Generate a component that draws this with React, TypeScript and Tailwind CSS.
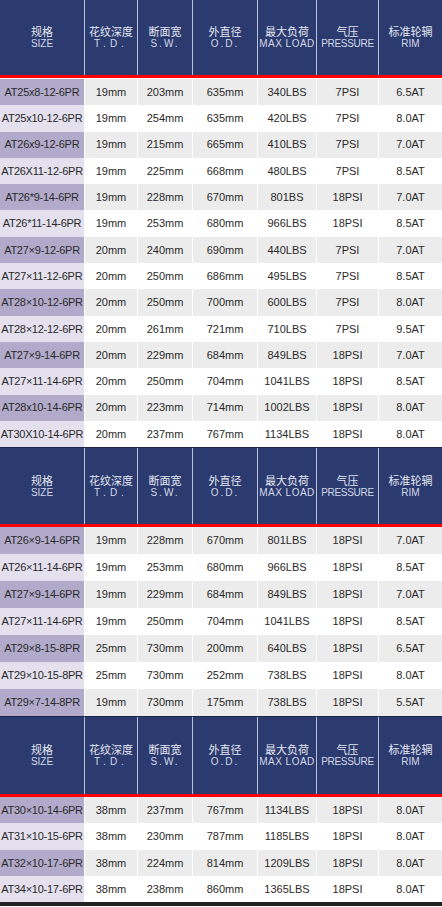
const cols = "grid grid-cols-[84px_53px_55px_65px_59px_62px_64px]"

const head = [
  { zh: "规格", en: "SIZE", track: "tracking-[0px]" },
  { zh: "花纹深度", en: "T.D.", track: "tracking-[4px]" },
  { zh: "断面宽", en: "S.W.", track: "tracking-[2px]" },
  { zh: "外直径", en: "O.D.", track: "tracking-[2px]" },
  { zh: "最大负荷", en: "MAX LOAD", track: "tracking-[0.5px]" },
  { zh: "气压", en: "PRESSURE", track: "tracking-[-0.3px]" },
  { zh: "标准轮辋", en: "RIM", track: "tracking-[0px]" },
]

const t1 = [
  ["AT25x8-12-6PR", "19mm", "203mm", "635mm", "340LBS", "7PSI", "6.5AT"],
  ["AT25x10-12-6PR", "19mm", "254mm", "635mm", "420LBS", "7PSI", "8.0AT"],
  ["AT26x9-12-6PR", "19mm", "215mm", "665mm", "410LBS", "7PSI", "7.0AT"],
  ["AT26X11-12-6PR", "19mm", "225mm", "668mm", "480LBS", "7PSI", "8.5AT"],
  ["AT26*9-14-6PR", "19mm", "228mm", "670mm", "801BS", "18PSI", "7.0AT"],
  ["AT26*11-14-6PR", "19mm", "253mm", "680mm", "966LBS", "18PSI", "8.5AT"],
  ["AT27×9-12-6PR", "20mm", "240mm", "690mm", "440LBS", "7PSI", "7.0AT"],
  ["AT27×11-12-6PR", "20mm", "250mm", "686mm", "495LBS", "7PSI", "8.5AT"],
  ["AT28×10-12-6PR", "20mm", "250mm", "700mm", "600LBS", "7PSI", "8.0AT"],
  ["AT28×12-12-6PR", "20mm", "261mm", "721mm", "710LBS", "7PSI", "9.5AT"],
  ["AT27×9-14-6PR", "20mm", "229mm", "684mm", "849LBS", "18PSI", "7.0AT"],
  ["AT27×11-14-6PR", "20mm", "250mm", "704mm", "1041LBS", "18PSI", "8.5AT"],
  ["AT28x10-14-6PR", "20mm", "223mm", "714mm", "1002LBS", "18PSI", "8.0AT"],
  ["AT30X10-14-6PR", "20mm", "237mm", "767mm", "1134LBS", "18PSI", "8.0AT"],
]

const t2 = [
  ["AT26×9-14-6PR", "19mm", "228mm", "670mm", "801LBS", "18PSI", "7.0AT"],
  ["AT26×11-14-6PR", "19mm", "253mm", "680mm", "966LBS", "18PSI", "8.5AT"],
  ["AT27×9-14-6PR", "19mm", "229mm", "684mm", "849LBS", "18PSI", "7.0AT"],
  ["AT27×11-14-6PR", "19mm", "250mm", "704mm", "1041LBS", "18PSI", "8.5AT"],
  ["AT29×8-15-8PR", "25mm", "730mm", "200mm", "640LBS", "18PSI", "6.5AT"],
  ["AT29×10-15-8PR", "25mm", "730mm", "252mm", "738LBS", "18PSI", "8.0AT"],
  ["AT29×7-14-8PR", "19mm", "730mm", "175mm", "738LBS", "18PSI", "5.5AT"],
]

const t3 = [
  ["AT30×10-14-6PR", "38mm", "237mm", "767mm", "1134LBS", "18PSI", "8.0AT"],
  ["AT31×10-15-6PR", "38mm", "230mm", "787mm", "1185LBS", "18PSI", "8.0AT"],
  ["AT32×10-17-6PR", "38mm", "224mm", "814mm", "1209LBS", "18PSI", "8.0AT"],
  ["AT34×10-17-6PR", "38mm", "238mm", "860mm", "1365LBS", "18PSI", "8.0AT"],
]

function Header({ h }: { h: string }) {
  return (
    <div className={`${cols} ${h} bg-[#2b3a6f]`}>
      {head.map((c, i) => (
        <div
          key={i}
          className={`flex flex-col items-center justify-center ${
            i > 0 ? "border-l border-l-[#b9c0d8]" : ""
          }`}
        >
          <span className="text-[11px] leading-[13px] text-[#e4e7f1] font-['Noto_Sans_CJK_SC',sans-serif]">
            {c.zh}
          </span>
          <span
            className={`text-[10px] leading-[12px] text-[#d3d8e8] font-['Liberation_Sans',sans-serif] ${c.track}`}
          >
            {c.en}
          </span>
        </div>
      ))}
    </div>
  )
}

function Rows({ rows, h }: { rows: string[][]; h: string }) {
  return (
    <div>
      {rows.map((r, i) => {
        const odd = i % 2 === 0
        return (
          <div key={i} className={`${cols} ${h}`}>
            {r.map((v, j) => (
              <div
                key={j}
                className={`flex items-center justify-center whitespace-nowrap text-[11px] text-[#2a2a2a] font-['Liberation_Sans',sans-serif] ${
                  j > 0 ? "border-l border-l-white" : "tracking-[-0.25px]"
                } ${
                  j === 0
                    ? odd
                      ? "bg-[#b2aacb]"
                      : "bg-[#e4e0ee]"
                    : odd
                    ? "bg-[#ececec]"
                    : "bg-white"
                }`}
              >
                {v}
              </div>
            ))}
          </div>
        )
      })}
    </div>
  )
}

export default function App() {
  return (
    <div className="w-[442px] bg-white">
      <Header h="h-[75px]" />
      <div className="h-[3px] bg-[#ff0000]" />
      <div className="h-px bg-white" />
      <Rows rows={t1} h="h-[26.3px]" />

      <div className="h-px bg-[#1d2549]" />
      <Header h="h-[76px]" />
      <div className="h-[3px] bg-[#ff0000]" />
      <Rows rows={t2} h="h-[27px]" />

      <div className="h-px bg-[#1d2549]" />
      <Header h="h-[77px]" />
      <div className="h-[3px] bg-[#ff0000]" />
      <Rows rows={t3} h="h-[26.3px]" />
      <div className="h-[4px] bg-[#222]" />
    </div>
  )
}
